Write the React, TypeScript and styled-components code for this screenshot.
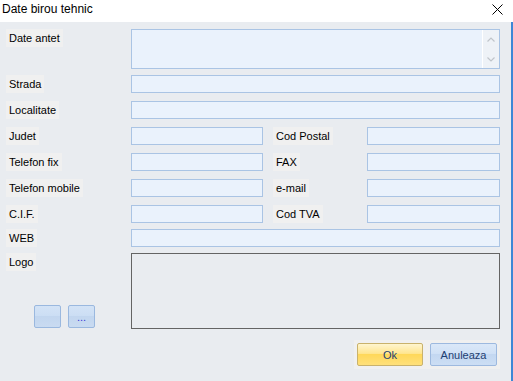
import React from "react";
import styled, { createGlobalStyle } from "styled-components";

const Global = createGlobalStyle`
  html, body { margin: 0; padding: 0; background: #ffffff; }
  body { font-family: "Liberation Sans", Arial, sans-serif; }
`;

const Window = styled.div`
  width: 513px;
  height: 381px;
  display: flex;
  flex-direction: column;
  background: #ffffff;
  overflow: hidden;
`;

const TitleBar = styled.div`
  height: 22px;
  flex: none;
  display: flex;
  justify-content: space-between;
  align-items: flex-start;
  background: #ffffff;
`;

const Title = styled.div`
  padding-left: 2px;
  font-family: "Liberation Sans", Arial, sans-serif;
  font-size: 12px;
  line-height: 18px;
  color: #000000;
`;

const Close = styled.svg`
  margin-top: 4px;
  margin-right: 10px;
`;

const Body = styled.div`
  flex: 1;
  background: #e9ecf0;
  border-right: 2px solid #3d87d6;
  padding: 7px 11px 0 6px;
  display: flex;
  flex-direction: column;
`;

const Row = styled.div<{ $mt: number; $h: number }>`
  display: grid;
  grid-template-columns: 125px 1fr;
  margin-top: ${(p) => p.$mt}px;
  height: ${(p) => p.$h}px;
`;

const SplitRow = styled.div<{ $mt: number }>`
  display: grid;
  grid-template-columns: 125px 132px 1fr 133px;
  margin-top: ${(p) => p.$mt}px;
  height: 18px;
`;

const Label = styled.div<{ $ml?: number }>`
  justify-self: start;
  align-self: start;
  height: 18px;
  line-height: 18px;
  padding: 0 3px;
  margin-left: ${(p) => p.$ml ?? 0}px;
  background: #f0f0f0;
  font-size: 11px;
  color: #000000;
  white-space: nowrap;
`;

const Input = styled.div`
  box-sizing: border-box;
  height: 18px;
  background: #eaf2fc;
  border: 1px solid #aac4e4;
`;

const TextArea = styled.div`
  box-sizing: border-box;
  height: 40px;
  background: #eaf2fc;
  border: 1px solid #aac4e4;
  display: flex;
  justify-content: flex-end;
`;

const Scroll = styled.div`
  width: 16px;
  background: #eef2f7;
  border-left: 1px solid #ffffff;
  display: flex;
  flex-direction: column;
  justify-content: space-between;
  align-items: center;
  padding: 7px 0 6px;
`;

const LogoCol = styled.div`
  display: flex;
  flex-direction: column;
  justify-content: space-between;
  align-items: flex-start;
  padding-bottom: 1px;
`;

const SmallButtons = styled.div`
  display: flex;
  gap: 7px;
  margin-left: 28px;
`;

const SmallButton = styled.div`
  box-sizing: border-box;
  width: 27px;
  height: 23px;
  border: 1px solid #9ab8df;
  border-radius: 2px;
  background: linear-gradient(#d3e3f6 0%, #ccdef4 45%, #c2d6ef 50%, #c9dbf1 100%);
  display: flex;
  align-items: flex-end;
  justify-content: center;
  padding-bottom: 4px;
  font-size: 11px;
  line-height: 11px;
  color: #3b3bd6;
`;

const LogoBox = styled.div`
  box-sizing: border-box;
  height: 76px;
  border: 1px solid #646464;
  background: #e9ecf0;
`;

const Footer = styled.div`
  display: flex;
  justify-content: flex-end;
  margin-top: 11px;
`;

const ButtonPanel = styled.div`
  display: flex;
  gap: 7px;
  padding: 3px;
  background: #f0f0f0;
`;

const Button = styled.div<{ $primary?: boolean }>`
  box-sizing: border-box;
  width: ${(p) => (p.$primary ? 66 : 67)}px;
  height: 23px;
  border-radius: 2px;
  border: 1px solid ${(p) => (p.$primary ? "#c9b26c" : "#9db9df")};
  background: ${(p) =>
    p.$primary
      ? "linear-gradient(#fff5cf 0%, #ffe690 45%, #ffd85a 50%, #ffe07a 100%)"
      : "linear-gradient(#dbe8f8 0%, #d0e1f6 45%, #c3d7f1 50%, #ccdef4 100%)"};
  display: flex;
  align-items: center;
  justify-content: center;
  font-size: 11px;
  color: #1e3f72;
`;

const Chevron = ({ up }: { up?: boolean }) => (
  <svg width="8" height="5" viewBox="0 0 8 5">
    <path
      d={up ? "M0.5 4.5 L4 1 L7.5 4.5" : "M0.5 0.5 L4 4 L7.5 0.5"}
      fill="none"
      stroke="#c0c5cb"
      strokeWidth="1.2"
    />
  </svg>
);

export default function App() {
  return (
    <>
      <Global />
      <Window>
        <TitleBar>
          <Title>Date birou tehnic</Title>
          <Close width="11" height="11" viewBox="0 0 11 11">
            <path d="M0.5 0.5 L10.5 10.5 M10.5 0.5 L0.5 10.5" stroke="#000" strokeWidth="1" />
          </Close>
        </TitleBar>
        <Body>
          <Row $mt={0} $h={40}>
            <Label>Date antet</Label>
            <TextArea>
              <Scroll>
                <Chevron up />
                <Chevron />
              </Scroll>
            </TextArea>
          </Row>
          <Row $mt={6} $h={18}>
            <Label>Strada</Label>
            <Input />
          </Row>
          <Row $mt={8} $h={18}>
            <Label>Localitate</Label>
            <Input />
          </Row>
          <SplitRow $mt={8}>
            <Label>Judet</Label>
            <Input />
            <Label $ml={10}>Cod Postal</Label>
            <Input />
          </SplitRow>
          <SplitRow $mt={8}>
            <Label>Telefon fix</Label>
            <Input />
            <Label $ml={10}>FAX</Label>
            <Input />
          </SplitRow>
          <SplitRow $mt={8}>
            <Label>Telefon mobile</Label>
            <Input />
            <Label $ml={10}>e-mail</Label>
            <Input />
          </SplitRow>
          <SplitRow $mt={8}>
            <Label>C.I.F.</Label>
            <Input />
            <Label $ml={10}>Cod TVA</Label>
            <Input />
          </SplitRow>
          <Row $mt={6} $h={18}>
            <Label>WEB</Label>
            <Input />
          </Row>
          <Row $mt={6} $h={76}>
            <LogoCol>
              <Label>Logo</Label>
              <SmallButtons>
                <SmallButton />
                <SmallButton>...</SmallButton>
              </SmallButtons>
            </LogoCol>
            <LogoBox />
          </Row>
          <Footer>
            <ButtonPanel>
              <Button $primary>Ok</Button>
              <Button>Anuleaza</Button>
            </ButtonPanel>
          </Footer>
        </Body>
      </Window>
    </>
  );
}
